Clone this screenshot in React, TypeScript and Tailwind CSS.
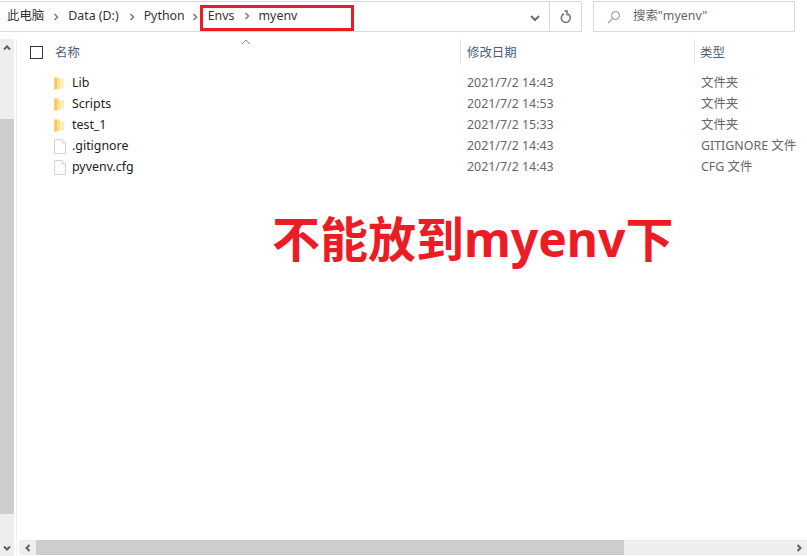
const sans = "font-['Noto_Sans','Noto_Sans_CJK_SC',sans-serif]";

interface FileRow {
  name: string;
  date: string;
  type: string;
  folder?: boolean;
}

const rows: FileRow[] = [
  { name: "Lib", date: "2021/7/2 14:43", type: "文件夹", folder: true },
  { name: "Scripts", date: "2021/7/2 14:53", type: "文件夹", folder: true },
  { name: "test_1", date: "2021/7/2 15:33", type: "文件夹", folder: true },
  { name: ".gitignore", date: "2021/7/2 14:43", type: "GITIGNORE 文件" },
  { name: "pyvenv.cfg", date: "2021/7/2 14:43", type: "CFG 文件" },
];

const Crumb = () => (
  <svg width="6" height="8" viewBox="0 0 6 8" className="shrink-0">
    <path d="M1.5 1 L4.5 4 L1.5 7" fill="none" stroke="#7a7a7a" strokeWidth="1.5" />
  </svg>
);

const FolderIcon = () => (
  <svg width="10" height="13" viewBox="0 0 10 13">
    <path d="M0 0.5 H5 L6 2.5 H10 V11 L0 12.5 Z" fill="#fbe08f" />
    <path d="M0.5 0.5 H3 V12.5 H0.5 Z" fill="#f3c95c" />
    <path d="M6 2.5 H10 V11 H6 Z" fill="#fdeebc" />
  </svg>
);

const DocIcon = () => (
  <svg width="12" height="15" viewBox="0 0 12 15">
    <path d="M0.5 0.5 H8 L11.5 4 V14.5 H0.5 Z" fill="#fff" stroke="#d4d4d4" />
    <path d="M8 0.5 V4 H11.5" fill="#f4f4f4" stroke="#d4d4d4" />
  </svg>
);

const Arrow = ({ d }: { d: string }) => (
  <svg width="8" height="8" viewBox="0 0 8 8">
    <path d={d} fill="none" stroke="#606060" strokeWidth="2" />
  </svg>
);

export default function App() {
  return (
    <div className={`relative w-[807px] h-[556px] overflow-hidden bg-white text-[12.4px] text-[#333] ${sans}`}>
      <div className="flex h-[39px] pt-px pr-3">
        <div className="flex h-[31px] w-[582px] items-center justify-between border-y border-r border-[#d9d9d9] pl-[7px]">
          <div className="flex h-full items-center">
            <span>此电脑</span>
            <span className="mx-[9px]"><Crumb /></span>
            <span>Data (D:)</span>
            <span className="ml-[10px] mr-[9px]"><Crumb /></span>
            <span>Python</span>
            <span className="ml-[7px] mr-[2px]"><Crumb /></span>
            <div className="flex h-[26px] w-[154px] items-center self-end border-[3px] border-[#ed1c24] pb-[4px] pl-[5px]">
              <span>Envs</span>
              <span className="mx-[9px]"><Crumb /></span>
              <span>myenv</span>
            </div>
          </div>
          <div className="flex h-full items-center">
            <svg width="10" height="6" viewBox="0 0 10 6" className="mr-[9px] mt-[2px]">
              <path d="M1 1 L5 5 L9 1" fill="none" stroke="#6b6b6b" strokeWidth="2" />
            </svg>
            <div className="flex h-full w-[32px] items-center justify-center border-l border-[#d9d9d9]">
              <svg width="12" height="14" viewBox="0 0 12 14">
                <path d="M8 4 A4.5 4.5 0 1 1 4 3.8" fill="none" stroke="#707070" strokeWidth="1.5" />
                <path d="M3.5 1 H6 V5.5" fill="none" stroke="#707070" strokeWidth="1.5" transform="translate(1 0)" />
              </svg>
            </div>
          </div>
        </div>
        <div className="ml-[11px] flex h-[31px] w-[202px] items-center border border-[#d9d9d9] pl-[13px] text-[#666]">
          <svg width="14" height="14" viewBox="0 0 14 14" className="shrink-0">
            <circle cx="8.5" cy="5.5" r="4" fill="none" stroke="#8a8a8a" />
            <path d="M5.5 8.5 L1 13" fill="none" stroke="#b99a78" strokeWidth="1.2" />
          </svg>
          <span className="ml-[12px]">搜索"myenv"</span>
        </div>
      </div>

      <div className="flex h-[517px]">
        <div className="mr-[2px] flex h-[517px] w-[14px] shrink-0 flex-col bg-[#eeeeee]">
          <div className="flex h-[16px] items-center justify-center pt-[2px]"><Arrow d="M1 5.5 L4 2.5 L7 5.5" /></div>
          <div className="h-[64px]" />
          <div className="h-[395px] bg-[#cdcdcd]" />
          <div className="flex-1" />
          <div className="flex h-[16px] items-center justify-center"><Arrow d="M1 2.5 L4 5.5 L7 2.5" /></div>
        </div>

        <div className="flex min-w-0 flex-1 flex-col border-l border-[#f0f0f0] pl-px">
          <div className="relative flex h-[26px] items-center text-[#4c607a]">
            <div className="ml-[12px] h-[13px] w-[13px] border border-[#333]" />
            <span className="ml-[12px] w-[405px] pt-[2px]">名称</span>
            <div className="h-full border-l border-[#e5e5e5]" />
            <span className="ml-[6px] w-[227px] pt-[2px]">修改日期</span>
            <div className="h-full border-l border-[#e5e5e5]" />
            <span className="ml-[5px] pt-[2px]">类型</span>
            <svg width="10" height="6" viewBox="0 0 10 6" className="absolute left-[223px] top-0">
              <path d="M1 5 L5 1 L9 5" fill="none" stroke="#8a8a8a" />
            </svg>
          </div>

          <div className="mt-[8px] flex flex-col">
            {rows.map((row) => (
              <div key={row.name} className="flex h-[21px] items-center whitespace-nowrap">
                <div className="ml-[36px] flex w-[18px] justify-start">
                  {row.folder ? <FolderIcon /> : <DocIcon />}
                </div>
                <span className="w-[395px] text-[#222]">{row.name}</span>
                <span className="w-[234px] text-[#666]">{row.date}</span>
                <span className="text-[#666]">{row.type}</span>
              </div>
            ))}
          </div>

          <div className="flex-1" />

          <div className="ml-px mb-px flex h-[15px] w-[788px] items-center bg-[#eeeeee]">
            <div className="flex w-[17px] justify-center"><Arrow d="M5.5 1 L2.5 4 L5.5 7" /></div>
            <div className="h-full w-[588px] bg-[#cdcdcd]" />
            <div className="flex-1" />
            <div className="flex w-[17px] justify-center"><Arrow d="M2.5 1 L5.5 4 L2.5 7" /></div>
          </div>
        </div>
      </div>

      <div className="absolute left-[272px] top-[206px] text-[48px] leading-[66px] font-bold whitespace-nowrap text-[#ed1c24]">
        不能放到myenv下
      </div>
    </div>
  );
}
